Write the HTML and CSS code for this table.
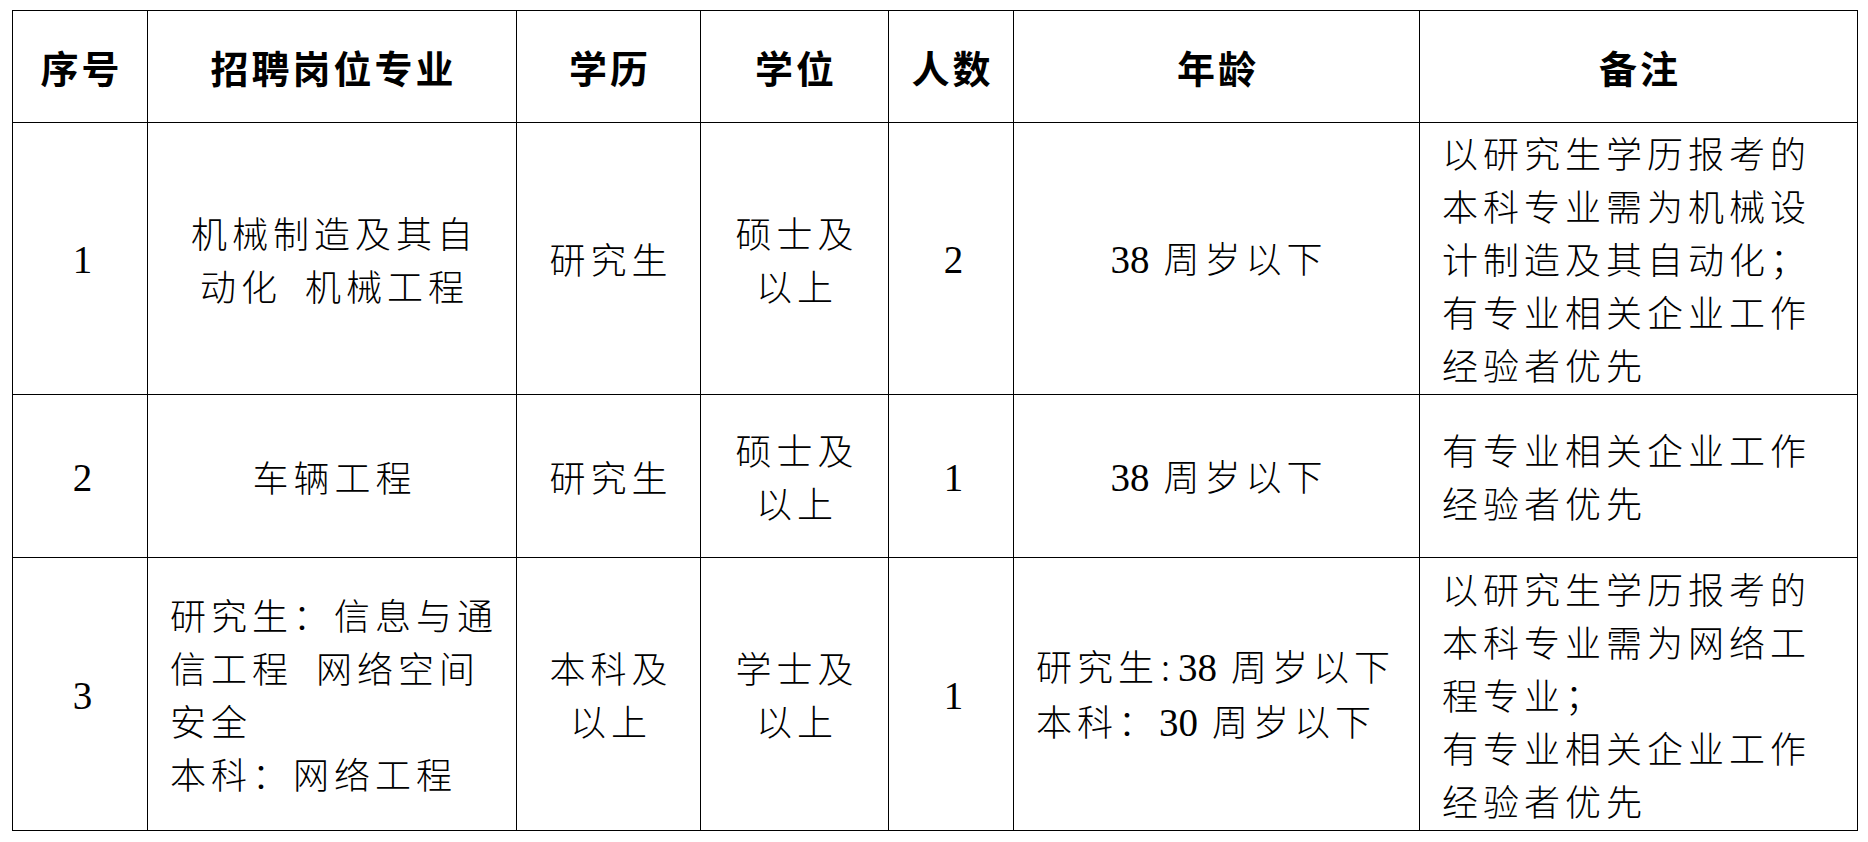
FILE: index.html
```html
<!DOCTYPE html>
<html lang="zh-CN">
<head>
<meta charset="utf-8">
<title>招聘岗位</title>
<link rel="stylesheet" href="styles.css">
</head>
<body>
<div class="page">
<table class="grid">
  <colgroup>
    <col class="c-no">
    <col class="c-major">
    <col class="c-edu">
    <col class="c-deg">
    <col class="c-cnt">
    <col class="c-age">
    <col class="c-note">
  </colgroup>
  <tr class="r-head">
    <th>序号</th>
    <th>招聘岗位专业</th>
    <th>学历</th>
    <th>学位</th>
    <th>人数</th>
    <th>年龄</th>
    <th>备注</th>
  </tr>
  <tr class="r1">
    <td><span class="num">1</span></td>
    <td>机械制造及其自<br>动化&ensp;机械工程</td>
    <td>研究生</td>
    <td>硕士及<br>以上</td>
    <td><span class="num">2</span></td>
    <td><span class="num gap">38</span>周岁以下</td>
    <td class="left">以研究生学历报考的<br>本科专业需为机械设<br>计制造及其自动化；<br>有专业相关企业工作<br>经验者优先</td>
  </tr>
  <tr class="r2">
    <td><span class="num">2</span></td>
    <td>车辆工程</td>
    <td>研究生</td>
    <td>硕士及<br>以上</td>
    <td><span class="num">1</span></td>
    <td><span class="num gap">38</span>周岁以下</td>
    <td class="left">有专业相关企业工作<br>经验者优先</td>
  </tr>
  <tr class="r3">
    <td><span class="num">3</span></td>
    <td class="left">研究生：信息与通<br>信工程&ensp;网络空间<br>安全<br>本科：网络工程</td>
    <td>本科及<br>以上</td>
    <td>学士及<br>以上</td>
    <td><span class="num">1</span></td>
    <td class="left">研究生<span class="colon">:</span><span class="num gap">38</span>周岁以下<br>本科：<span class="num gap">30</span>周岁以下</td>
    <td class="left">以研究生学历报考的<br>本科专业需为网络工<br>程专业；<br>有专业相关企业工作<br>经验者优先</td>
  </tr>
</table>
</div>
</body>
</html>
```
FILE: styles.css
```css
html, body {
  margin: 0;
  padding: 0;
  background: #ffffff;
}

body {
  font-family: "Noto Sans CJK SC", sans-serif;
  color: #000000;
}

.page {
  padding: 10px 0 0 12px;
}

.grid {
  border-collapse: collapse;
  table-layout: fixed;
  width: 1845px;
}

.c-no { width: 135px; }
.c-major { width: 369px; }
.c-edu { width: 184px; }
.c-deg { width: 188px; }
.c-cnt { width: 125px; }
.c-age { width: 406px; }
.c-note { width: 438px; }

.grid th,
.grid td {
  border: 1.5px solid #000000;
  text-align: center;
  vertical-align: middle;
  padding: 0 0 0 5px;
}

.grid th {
  font-weight: 700;
  font-size: 38px;
  letter-spacing: 3px;
  padding-left: 3px;
}

.grid td {
  font-weight: 300;
  font-size: 36px;
  letter-spacing: 5px;
  line-height: 53px;
}

.grid td.left {
  text-align: left;
  padding-left: 22px;
}

.r-head { height: 112px; }
.r1 { height: 272px; }
.r2 { height: 163px; }
.r3 { height: 273px; }

.num {
  font-family: "Liberation Serif", serif;
  font-weight: 400;
  font-size: 39px;
  letter-spacing: 0;
}

.num.gap {
  margin-right: 14px;
}

.colon {
  letter-spacing: 8px;
  padding-left: 2px;
}
```
